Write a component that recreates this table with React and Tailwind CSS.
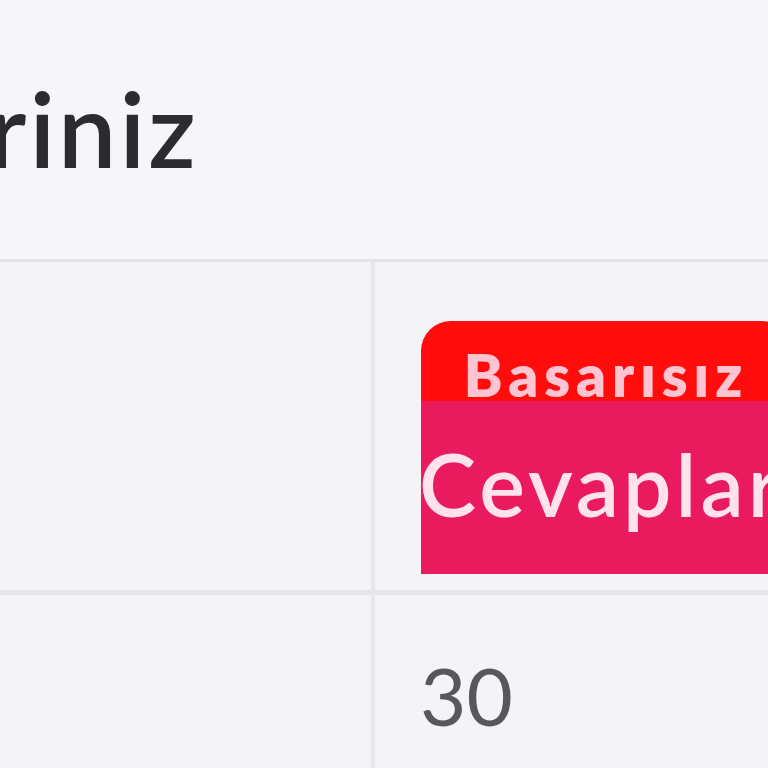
import React from 'react';

const font = { fontFamily: 'Lato, "Noto Sans", sans-serif' };

const ResultBadge = ({ status, label }) => (
  <div className="w-[370px] ml-[46px]">
    <div className="h-[80px] bg-[#ff0c0c] rounded-tl-[30px] rounded-tr-[30px] flex justify-center pt-[25px]">
      <span className="text-[58px] leading-[58px] font-extrabold tracking-[6px] text-[#ffc4d2] whitespace-nowrap">{status}</span>
    </div>
    <div className="h-[173px] bg-[#e91a5e] pt-[40px]">
      <span className="block ml-[-2px] text-[86px] leading-[86px] font-semibold tracking-[4px] text-[#ffe2ec] whitespace-nowrap">{label}</span>
    </div>
  </div>
);

export default function App() {
  return (
    <div className="w-[768px] h-[768px] overflow-hidden bg-[#f4f4f8]" style={font}>
      {/* Title */}
      <div className="h-[259px] bg-[#f6f6f9] pt-[76px] overflow-hidden">
        <h1 className="ml-[-12px] text-[104px] leading-[104px] font-semibold tracking-[3px] text-[#2b2b30] whitespace-nowrap">riniz</h1>
      </div>
      <div className="h-[3px] bg-[#e3e3e9]" />

      {/* Table */}
      <div className="grid grid-cols-[371px_4px_1fr]">
        <div className="h-[328px]" />
        <div className="row-span-3 bg-[#e6e6ec]" />
        <div className="h-[328px] pt-[59px]">
          <ResultBadge status="Basarısız" label="Cevaplar" />
        </div>
        <div className="h-[5px] bg-[#e5e5eb]" />
        <div className="h-[5px] bg-[#e5e5eb]" />
        <div className="h-[200px]" />
        <div className="h-[200px] pt-[60px] pl-[45px]">
          <span className="text-[80px] leading-[80px] text-[#58585c]">30</span>
        </div>
      </div>
    </div>
  );
}
